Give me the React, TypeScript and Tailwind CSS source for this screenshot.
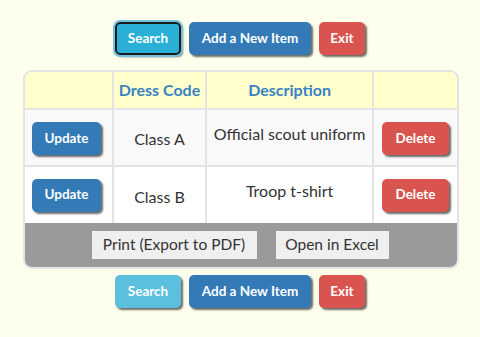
import React from "react";

const btn =
  "rounded-[5px] text-white font-bold text-[13.5px] leading-none shadow-[2px_2px_2px_rgba(60,60,60,0.75)]";

function TopBar({ active }: { active: boolean }) {
  return (
    <div className="flex items-start gap-[8px]">
      {active ? (
        <button
          className={`${btn} h-[33px] w-[66px] bg-[#2aafd6] border-2 border-[#1a1a1a] outline outline-2 outline-[#6fc3df]`}
        >
          Search
        </button>
      ) : (
        <button className={`${btn} h-[33px] w-[66px] bg-[#5bc0de]`}>Search</button>
      )}
      <button className={`${btn} h-[33px] w-[122px] bg-[#337ab7]`}>Add a New Item</button>
      <button className={`${btn} h-[33px] w-[46px] bg-[#d9534f]`}>Exit</button>
    </div>
  );
}

export default function App() {
  return (
    <div
      className="min-h-[337px] w-[480px] bg-[#fefeec] flex flex-col items-center pt-[22px]"
      style={{ fontFamily: "Lato, 'Open Sans', sans-serif" }}
    >
      <TopBar active />
      <div className="mt-[15px] w-[436px] ml-[2px] border-2 border-[#e3e3e3] rounded-[9px] overflow-hidden bg-white">
        <table className="w-full border-collapse">
          <thead>
            <tr className="bg-[#ffffcc] h-[37px]">
              <th className="w-[88px] border-r-2 border-b-2 border-[#e3e3e3]"></th>
              <th className="w-[94px] border-r-2 border-b-2 border-[#e3e3e3] text-[16px] font-bold text-[#3a82c4]">
                Dress Code
              </th>
              <th className="w-[168px] border-r-2 border-b-2 border-[#e3e3e3] text-[16px] font-bold text-[#3a82c4]">
                Description
              </th>
              <th className="border-b-2 border-[#e3e3e3]"></th>
            </tr>
          </thead>
          <tbody>
            <tr className="bg-[#f9f9f9] h-[57px]">
              <td className="border-r-2 border-b-2 border-[#e3e3e3] pl-[7px] align-middle">
                <button className={`${btn} h-[33px] w-[69px] bg-[#337ab7] mt-[2px]`}>Update</button>
              </td>
              <td className="border-r-2 border-b-2 border-[#e3e3e3] text-center align-middle text-[16px] text-[#333] pt-[3px]">
                Class A
              </td>
              <td className="border-r-2 border-b-2 border-[#e3e3e3] text-center align-top text-[16px] text-[#333] pt-[12px]">
                Official scout uniform
              </td>
              <td className="border-b-2 border-[#e3e3e3] px-[8px] align-middle">
                <button className={`${btn} h-[33px] w-[67px] bg-[#d9534f] mt-[2px]`}>Delete</button>
              </td>
            </tr>
            <tr className="bg-white h-[57px]">
              <td className="border-r-2 border-[#e3e3e3] pl-[7px] align-middle">
                <button className={`${btn} h-[33px] w-[69px] bg-[#337ab7]`}>Update</button>
              </td>
              <td className="border-r-2 border-[#e3e3e3] text-center align-middle text-[16px] text-[#333] pt-[3px]">
                Class B
              </td>
              <td className="border-r-2 border-[#e3e3e3] text-center align-top text-[16px] text-[#333] pt-[12px]">
                Troop t-shirt
              </td>
              <td className="px-[8px] align-middle">
                <button className={`${btn} h-[33px] w-[67px] bg-[#d9534f]`}>Delete</button>
              </td>
            </tr>
          </tbody>
        </table>
        <div className="bg-[#9a9a9a] h-[44px] flex items-center justify-center gap-[19px] pr-[2px]">
          <button className="h-[28px] w-[165px] bg-[#efefef] text-[15.5px] text-[#333]">
            Print (Export to PDF)
          </button>
          <button className="h-[28px] w-[113px] bg-[#efefef] text-[15.5px] text-[#333]">
            Open in Excel
          </button>
        </div>
      </div>
      <div className="mt-[6px]">
        <TopBar active={false} />
      </div>
    </div>
  );
}
